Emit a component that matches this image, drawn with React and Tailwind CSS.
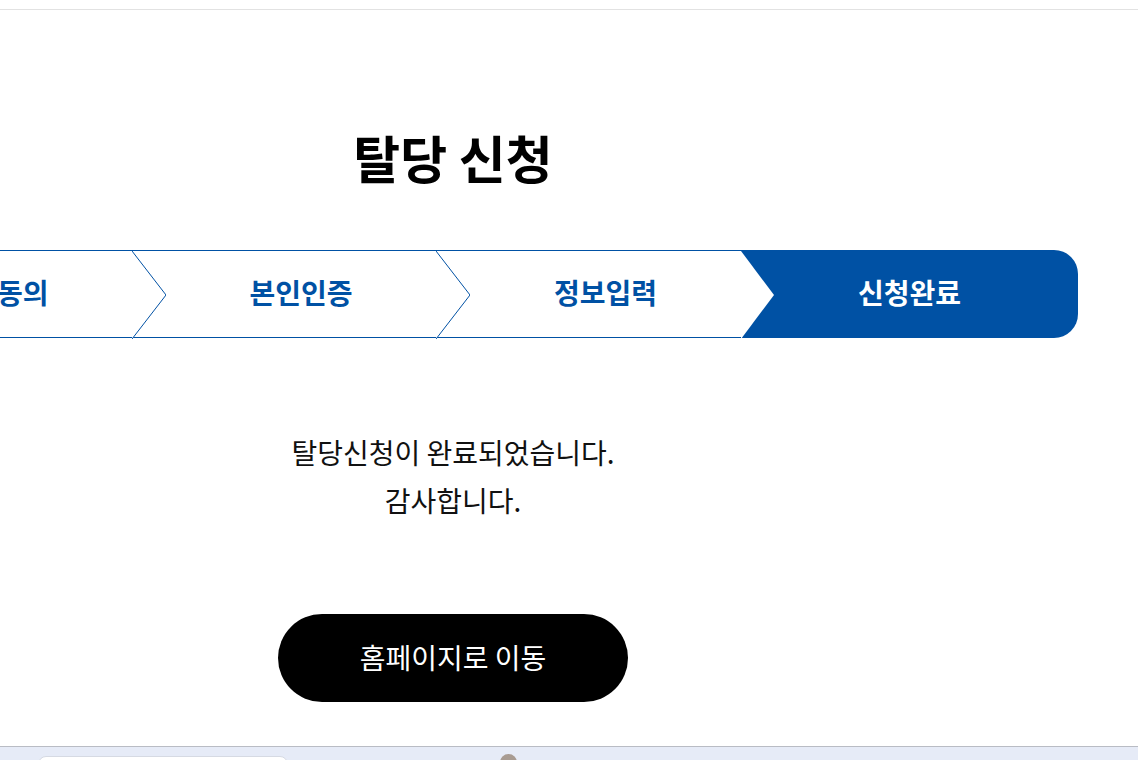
import React from 'react';

const steps = [
  { label: '약관동의', width: 'w-[304px]' },
  { label: '본인인증', width: 'w-[304px]' },
  { label: '정보입력', width: 'w-[305px]', beforeActive: true },
];

const Chevron = ({ filled }) => (
  <svg
    className="absolute top-0 right-[-34px] z-10 h-[88px] w-[34px]"
    viewBox="0 0 34 88"
    fill="none"
  >
    {filled ? (
      <polygon points="0,0 33,44 0,88" fill="#ffffff" />
    ) : (
      <polyline points="0,0 34,44 0,88" stroke="#0051a4" strokeWidth="1" fill="#ffffff" />
    )}
  </svg>
);

const StepBar = () => (
  <div className="mt-[62px] flex h-[88px]">
    {steps.map((step) => (
      <div
        key={step.label}
        className={`relative ${step.width} flex shrink-0 items-center justify-center border-y border-[#0051a4] pl-[34px]`}
      >
        <span className="pb-[4px] text-[28px] font-bold text-[#0051a4]">{step.label}</span>
        <Chevron filled={step.beforeActive} />
      </div>
    ))}
    <div className="flex w-[337px] shrink-0 items-center justify-center rounded-r-[24px] bg-[#0051a4]">
      <span className="pb-[4px] text-[28px] font-bold text-white">신청완료</span>
    </div>
  </div>
);

export default function App() {
  return (
    <div className="flex h-[760px] flex-col overflow-hidden bg-white font-['Noto_Sans_CJK_KR','Noto_Sans',sans-serif] text-black">
      <div className="h-[10px] shrink-0 border-b border-[#e2e2e2]" />

      <main className="flex-1 overflow-hidden">
        <div className="ml-[-172px] flex w-[1250px] flex-col items-center pt-[116px]">
          <h2 className="text-[51px] font-bold leading-[62px]">탈당 신청</h2>

          <StepBar />

          <div className="mt-[90px] text-center text-[28px] leading-[48px] text-[#111]">
            <p>탈당신청이 완료되었습니다.</p>
            <p>감사합니다.</p>
          </div>

          <button className="mt-[90px] flex h-[88px] w-[350px] items-center justify-center rounded-full bg-black pb-[2px] text-[28px] text-white">
            홈페이지로 이동
          </button>
        </div>
      </main>

      <div className="flex h-[14px] shrink-0 items-start border-t border-[#b9bcc4] bg-[#e6ebf7] pl-[38px]">
        <div className="mt-[9px] h-[12px] w-[250px] rounded-t-lg border border-[#d6dae3] bg-white" />
        <div className="ml-[212px] mt-[7px] h-[17px] w-[17px] rounded-full bg-[#a89b92]" />
      </div>
    </div>
  );
}
